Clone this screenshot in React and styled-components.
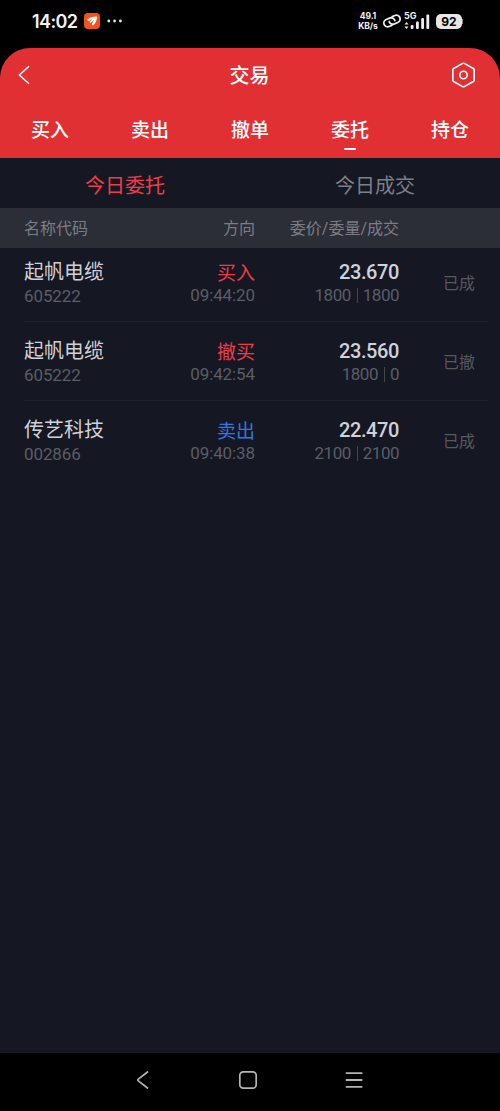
import React from "react";
import styled, { createGlobalStyle } from "styled-components";

const GlobalStyle = createGlobalStyle`
  * {
    box-sizing: border-box;
  }
  body {
    margin: 0;
    background: #000;
    font-family: Roboto, "Noto Sans CJK SC", sans-serif;
  }
`;

const Screen = styled.div`
  display: flex;
  flex-direction: column;
  width: 500px;
  height: 1111px;
  background: #000;
  overflow: hidden;
`;

const StatusBar = styled.div`
  display: flex;
  justify-content: space-between;
  height: 48px;
  padding: 10px 37px 16px 32px;
  color: #f2f2f2;
  font-family: Inter, sans-serif;
`;

const StatusGroup = styled.div`
  display: flex;
  align-items: center;
`;

const Clock = styled.span`
  width: 52px;
  padding-top: 2px;
  font-size: 18px;
  font-weight: 600;
  line-height: 22px;
  letter-spacing: -0.6px;
`;

const NetSpeed = styled.div`
  width: 22px;
  margin-right: 3px;
  font-size: 8.5px;
  font-weight: 700;
  line-height: 10px;
  letter-spacing: -0.1px;
  text-align: center;
  white-space: nowrap;
`;

const Battery = styled.div`
  width: 26px;
  height: 15px;
  margin-left: 6px;
  border-radius: 5px;
  background: #e6e6e6;
  color: #000;
  font-size: 12px;
  font-weight: 700;
  line-height: 15px;
  text-align: center;
`;

const BatteryTip = styled.div`
  width: 1px;
  height: 5px;
  background: #888;
`;

const Header = styled.header`
  height: 110px;
  border-radius: 30px 30px 0 0;
  background: #e03033;
  color: #fff;
`;

const TitleBar = styled.div`
  display: flex;
  align-items: center;
  justify-content: space-between;
  height: 54px;
  padding: 0 23px 0 16px;
`;

const Title = styled.h1`
  margin: 0 0 0 17px;
  padding-top: 2px;
  font-size: 20px;
  font-weight: 500;
  line-height: 30px;
`;

const Tabs = styled.nav`
  display: flex;
  height: 56px;
`;

const Tab = styled.div`
  display: flex;
  flex: 1;
  flex-direction: column;
  align-items: center;
  padding-top: 14px;
  font-size: 19px;
  font-weight: 500;
  line-height: 30px;

  &::after {
    content: "";
    width: 12px;
    height: 2px;
    margin-top: 2px;
    border-radius: 1px;
    background: ${(props) => (props.$active ? "#fff" : "transparent")};
  }
`;

const Content = styled.main`
  flex: 1;
  background: #151722;
`;

const SubTabs = styled.div`
  display: flex;
  height: 50px;
`;

const SubTab = styled.div`
  flex: 1;
  font-size: 20px;
  line-height: 56px;
  text-align: center;
  color: ${(props) => (props.$active ? "#f03c4a" : "#7d7f88")};
`;

const columns = `
  display: grid;
  grid-template-columns: 131px 100px 144px 76px;
`;

const TableHead = styled.div`
  ${columns}
  height: 40px;
  padding-left: 24px;
  background: #2b2d37;
  color: #7b7d86;
  font-size: 16px;
  line-height: 41px;
  text-align: right;

  span:first-child {
    text-align: left;
  }
`;

const List = styled.div`
  padding-left: 24px;
  padding-right: 12px;
`;

const Row = styled.div`
  ${columns}
  height: 79px;
  padding-top: 14px;
  border-bottom: 1px solid #20222c;

  &:first-child {
    height: 74px;
    padding-top: 9px;
  }
  &:last-child {
    border-bottom: 0;
  }
`;

const Cell = styled.div`
  text-align: ${(props) => (props.$left ? "left" : "right")};
`;

const Name = styled.div`
  font-size: 20px;
  line-height: 30px;
  color: #d0d1d7;
`;

const Side = styled.div`
  padding-top: 3px;
  font-size: 19px;
  line-height: 27px;
  color: ${(props) => (props.$sell ? "#3475e0" : "#f03c4a")};
`;

const Price = styled.div`
  padding-top: 1px;
  font-size: 20px;
  font-weight: 500;
  line-height: 29px;
  letter-spacing: -0.4px;
  color: #d0d1d9;
`;

const Small = styled.div`
  display: flex;
  align-items: center;
  justify-content: ${(props) => (props.$left ? "flex-start" : "flex-end")};
  margin-top: ${(props) => (props.$left ? "-1px" : "-2px")};
  font-size: 17px;
  line-height: 20px;
  letter-spacing: ${(props) => props.$spacing || "-0.1px"};
  color: #5b5d67;
`;

const Divider = styled.span`
  width: 1px;
  height: 15px;
  margin: 0 5px 0 6px;
  background: #444650;
`;

const State = styled.div`
  padding-top: 15px;
  font-size: 16px;
  line-height: 24px;
  text-align: right;
  color: #555761;
`;

const NavBar = styled.footer`
  display: flex;
  align-items: center;
  justify-content: space-between;
  height: 58px;
  padding: 0 136px 4px 132px;
  background: #000;
`;

const orders = [
  { name: "起帆电缆", code: "605222", side: "买入", time: "09:44:20", price: "23.670", amount: "1800", filled: "1800", state: "已成" },
  { name: "起帆电缆", code: "605222", side: "撤买", time: "09:42:54", price: "23.560", amount: "1800", filled: "0", state: "已撤" },
  { name: "传艺科技", code: "002866", side: "卖出", time: "09:40:38", price: "22.470", amount: "2100", filled: "2100", state: "已成" },
];

const AppBadge = () => (
  <svg width="16" height="16" viewBox="0 0 16 16">
    <rect width="16" height="16" rx="4" fill="#f4511e" />
    <path d="M3 6.8C5.4 4.4 9 3.3 13 3.4c0 3.7-1.4 7-4.3 9.4l-.9-2.1 2.5-4-3.8 3.4-1.2-1 3.6-3.3-4.5 2.4z" fill="#fff" />
  </svg>
);

const More = () => (
  <svg width="16" height="4" viewBox="0 0 16 4" style={{ marginLeft: 7 }} fill="#e8e8e8">
    <circle cx="1.8" cy="2" r="1.4" />
    <circle cx="7.6" cy="2" r="1.4" />
    <circle cx="13.4" cy="2" r="1.4" />
  </svg>
);

const LinkIcon = () => (
  <svg width="20" height="16" viewBox="0 0 20 16" fill="none" stroke="#eee" strokeWidth="1.8" strokeLinecap="round">
    <g transform="rotate(-22 10 8)">
      <path d="M8.2 12H5.200a3.800 3.800 0 0 1 0-7.600h4.200a3.800 3.800 0 0 1 3.400 4.200" />
      <path d="M11.800 4h3a3.800 3.800 0 0 1 0 7.600h-4.200a3.800 3.800 0 0 1-3.400-4.200" />
    </g>
  </svg>
);

const Signal = () => (
  <svg width="26" height="20" viewBox="0 0 26 20" fill="#eee" style={{ marginLeft: 2 }}>
    <text x="0" y="8" fontSize="9" fontWeight="700" fontFamily="Inter, sans-serif">5G</text>
    <path d="M2.500 11l2 2.600h-4zM2.500 18l2-2.600h-4z" />
    <rect x="6.700" y="14" width="2.800" height="4" rx="1" />
    <rect x="12" y="10.500" width="2.800" height="7.500" rx="1" />
    <rect x="17.200" y="7" width="2.800" height="11" rx="1" />
    <rect x="22.400" y="3.500" width="2.800" height="14.500" rx="1" />
  </svg>
);

const BackIcon = () => (
  <svg width="16" height="22" viewBox="0 0 16 22" fill="none" stroke="#fff" strokeWidth="1.500">
    <path d="M13 2.200L3.400 11l9.600 8.800" />
  </svg>
);

const SettingsIcon = () => (
  <svg width="27" height="28" viewBox="0 0 27 28" fill="none" stroke="#fff" strokeWidth="1.600" strokeLinejoin="round">
    <path d="M12.700 2.400q.8-.4 1.600 0l9.100 5.100q.8.500.8 1.400v10.200q0 .9-.8 1.400l-9.100 5.100q-.8.400-1.600 0l-9.100-5.100q-.8-.5-.8-1.400V8.900q0-.9.800-1.400z" />
    <circle cx="13.500" cy="14" r="3.700" />
  </svg>
);

const App = () => {
  return (
    <Screen>
      <GlobalStyle />
      <StatusBar>
        <StatusGroup>
          <Clock>14:02</Clock>
          <AppBadge />
          <More />
        </StatusGroup>
        <StatusGroup>
          <NetSpeed>
            <div>49.1</div>
            <div>KB/s</div>
          </NetSpeed>
          <LinkIcon />
          <Signal />
          <Battery>92</Battery>
          <BatteryTip />
        </StatusGroup>
      </StatusBar>
      <Header>
        <TitleBar>
          <BackIcon />
          <Title>交易</Title>
          <SettingsIcon />
        </TitleBar>
        <Tabs>
          {["买入", "卖出", "撤单", "委托", "持仓"].map((label) => (
            <Tab key={label} $active={label === "委托"}>{label}</Tab>
          ))}
        </Tabs>
      </Header>
      <Content>
        <SubTabs>
          <SubTab $active>今日委托</SubTab>
          <SubTab>今日成交</SubTab>
        </SubTabs>
        <TableHead>
          <span>名称代码</span>
          <span>方向</span>
          <span>委价/委量/成交</span>
        </TableHead>
        <List>
          {orders.map((order) => (
            <Row key={order.time}>
              <Cell $left>
                <Name>{order.name}</Name>
                <Small $left>{order.code}</Small>
              </Cell>
              <Cell>
                <Side $sell={order.side === "卖出"}>{order.side}</Side>
                <Small>{order.time}</Small>
              </Cell>
              <Cell>
                <Price>{order.price}</Price>
                <Small $spacing="-0.5px">
                  {order.amount}
                  <Divider />
                  {order.filled}
                </Small>
              </Cell>
              <State>{order.state}</State>
            </Row>
          ))}
        </List>
      </Content>
      <NavBar>
        <svg width="20" height="22" viewBox="0 0 20 22" fill="none" stroke="#b4b4b4" strokeWidth="1.700" strokeLinecap="round" strokeLinejoin="round">
          <path d="M15.500 3L6.300 10.200q-1 .8 0 1.600L15.500 19" />
        </svg>
        <svg width="20" height="20" viewBox="0 0 20 20" fill="none" stroke="#b4b4b4" strokeWidth="1.700">
          <rect x="1.800" y="1.800" width="16.400" height="16.400" rx="3.500" />
        </svg>
        <svg width="20" height="20" viewBox="0 0 20 20" stroke="#b4b4b4" strokeWidth="1.800" strokeLinecap="round">
          <path d="M2.500 3.200h15.200M2.500 10h15.200M2.500 16.800h15.200" />
        </svg>
      </NavBar>
    </Screen>
  );
};

export default App;
